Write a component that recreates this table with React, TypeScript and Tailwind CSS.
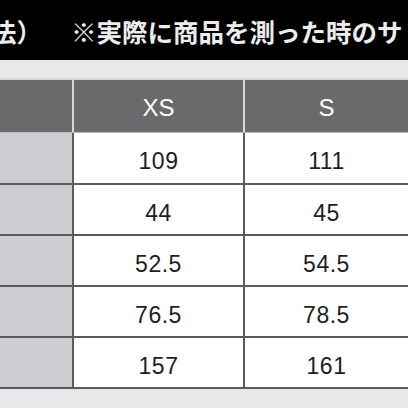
import React from "react";

const rows = [
  ["109", "111", 50],
  ["44", "45", 49],
  ["52.5", "54.5", 49],
  ["76.5", "78.5", 49],
  ["157", "161", 49],
] as const;

export default function App() {
  return (
    <div
      className="w-[408px] h-[408px] overflow-hidden bg-[#e8e7ea] flex flex-col"
      style={{ fontFamily: '"Liberation Sans", Arial, sans-serif' }}
    >
      <div
        className="h-[60px] shrink-0 bg-black flex items-center whitespace-nowrap overflow-hidden text-[#ececec] text-[25.5px] font-bold leading-none pt-[2px]"
        style={{ fontFamily: '"Noto Sans CJK JP", "Noto Sans", sans-serif' }}
      >
        <span className="ml-[-9px]">法）</span>
        <span className="ml-[29px]">※実際に商品を測った時のサ</span>
      </div>
      <div className="h-[18px] shrink-0" />
      <div className="shrink-0 border-t-2 border-[#d7d6d9] border-b border-b-[#b9b8bb] bg-[#d7d6d9] flex gap-[2px] h-[55px]">
        <div className="w-[72px] shrink-0 bg-[#6a696c]" />
        <div className="w-[169px] shrink-0 bg-[#6a696c] flex items-center justify-center pt-[4px] text-white text-[24px]">
          XS
        </div>
        <div className="flex-1 bg-[#6a696c] flex items-center justify-center pt-[4px] text-white text-[24px]">
          S
        </div>
      </div>
      <div className="shrink-0 flex flex-col">
        {rows.map(([a, b, h], i) => (
          <div key={i} className="flex flex-col">
            <div className="flex bg-[#5b5b5d] gap-[2px]" style={{ height: h }}>
              <div className="w-[72px] shrink-0 bg-[#cdccd1]" />
              <div className="w-[169px] shrink-0 bg-white flex items-center justify-center pt-[7px] text-[#1e1e1e] text-[23px] tracking-[0.5px]">
                {a}
              </div>
              <div className="flex-1 bg-white flex items-center justify-center pt-[7px] text-[#1e1e1e] text-[23px] tracking-[0.5px]">
                {b}
              </div>
            </div>
            <div className="h-[2px] bg-[#5b5b5d]" />
          </div>
        ))}
      </div>
    </div>
  );
}
